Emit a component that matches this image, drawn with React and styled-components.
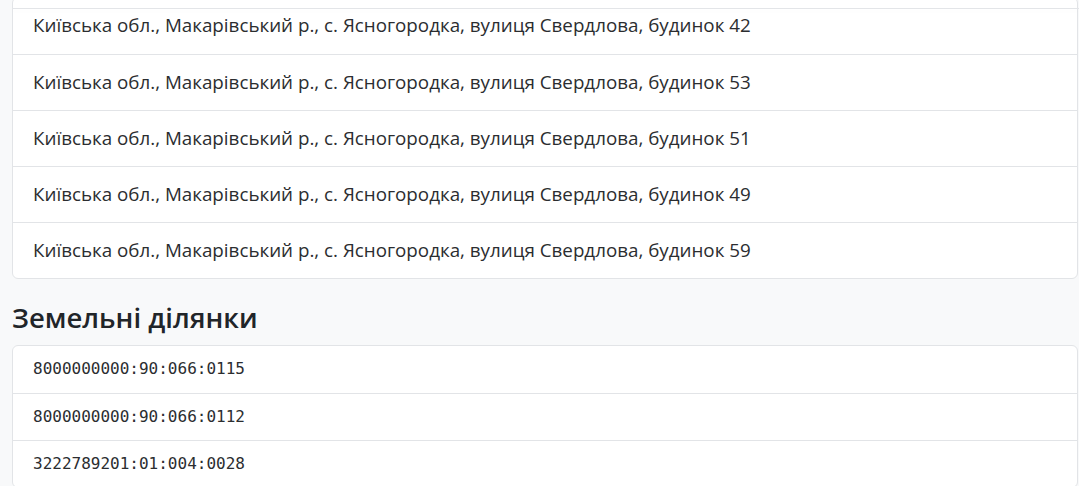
import styled, { createGlobalStyle } from "styled-components"

const Global = createGlobalStyle`
  body {
    margin: 0;
    background: #f8f9fa;
    font-family: "Open Sans", "Noto Sans", sans-serif;
    color: #212529;
    overflow: hidden;
  }
`

const Page = styled.div`
  padding: 0 1px 0 12px;
`

const TopEdge = styled.div`
  position: fixed;
  top: 8px;
  left: 12px;
  right: 0;
  height: 1px;
  background: #e3e5e8;
  box-shadow: 0 3px 3px rgba(0, 0, 0, 0.02);
`

const List = styled.ul`
  list-style: none;
  margin: ${(p) => p.$top || "0"} 0 0 0;
  padding: 0;
  background: #fff;
  border: 1px solid #e2e4e7;
  border-radius: 6px;
  overflow: hidden;
`

const Item = styled.li`
  height: ${(p) => p.$h}px;
  box-sizing: border-box;
  display: flex;
  align-items: center;
  padding: 0 20px 2px 20px;
  font-size: ${(p) => (p.$mono ? "16px" : "18.8px")};
  font-family: ${(p) =>
    p.$mono ? `"DejaVu Sans Mono", "Liberation Mono", monospace` : "inherit"};
  color: #2b2d30;
  & + & {
    border-top: 1px solid #e2e4e7;
  }
`

const Title = styled.h2`
  margin: 15px 0 3px 0;
  font-size: 27.5px;
  font-weight: 600;
  line-height: 1.75;
  color: #212529;
`

const houses = [42, 53, 51, 49, 59]
const parcels = [
  "8000000000:90:066:0115",
  "8000000000:90:066:0112",
  "3222789201:01:004:0028",
]

export default function App() {
  return (
    <>
      <Global />
      <Page>
        <List $top="-3px">
          {houses.map((n) => (
            <Item key={n} $h={56}>
              Київська обл., Макарівський р., с. Ясногородка, вулиця Свердлова, будинок {n}
            </Item>
          ))}
        </List>
        <Title>Земельні ділянки</Title>
        <List>
          {parcels.map((p) => (
            <Item key={p} $h={47} $mono>
              {p}
            </Item>
          ))}
        </List>
      </Page>
      <TopEdge />
    </>
  )
}
